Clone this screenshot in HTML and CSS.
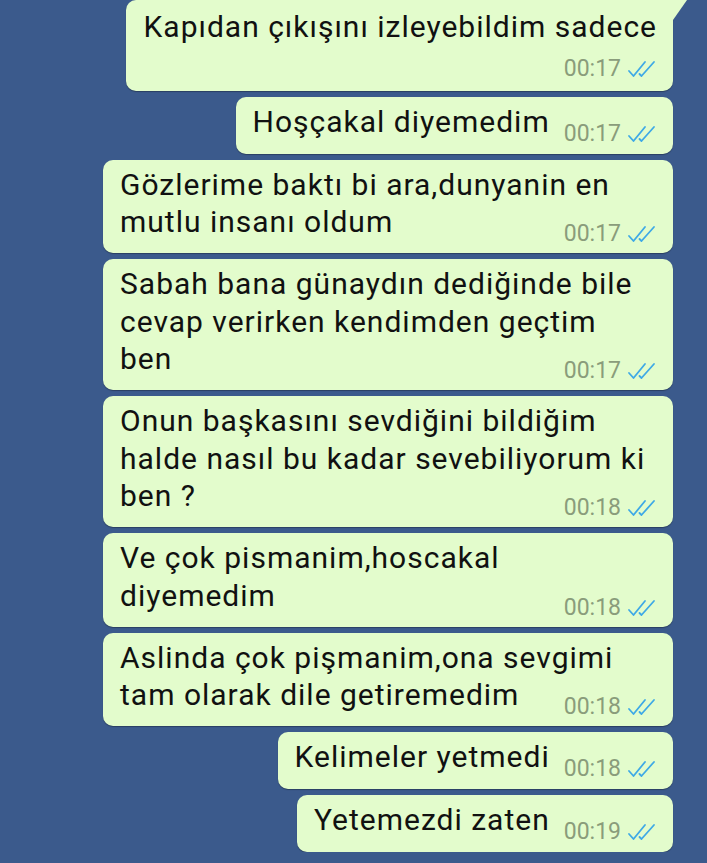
FILE: index.html
```html
<!DOCTYPE html>
<html lang="tr">
<head>
    <meta charset="utf-8">
    <title>Sohbet</title>
    <link rel="stylesheet" href="styles.css">
</head>
<body>
    <main class="chat">
        <div class="bubble first stack">
            <span class="text">Kapıdan çıkışını izleyebildim sadece</span>
            <span class="meta">00:17 <svg class="ticks" viewBox="0 0 30 18"><path d="M2 11 L6.5 16 L18 2"/><path d="M12.5 14 L14.5 16 L27 2"/></svg></span>
        </div>
        <div class="bubble">
            <span class="text">Hoşçakal diyemedim</span>
            <span class="meta">00:17 <svg class="ticks" viewBox="0 0 30 18"><path d="M2 11 L6.5 16 L18 2"/><path d="M12.5 14 L14.5 16 L27 2"/></svg></span>
        </div>
        <div class="bubble wide">
            <span class="text">Gözlerime baktı bi ara,dunyanin en mutlu insanı oldum</span>
            <span class="meta">00:17 <svg class="ticks" viewBox="0 0 30 18"><path d="M2 11 L6.5 16 L18 2"/><path d="M12.5 14 L14.5 16 L27 2"/></svg></span>
        </div>
        <div class="bubble wide">
            <span class="text">Sabah bana günaydın dediğinde bile cevap verirken kendimden geçtim ben</span>
            <span class="meta">00:17 <svg class="ticks" viewBox="0 0 30 18"><path d="M2 11 L6.5 16 L18 2"/><path d="M12.5 14 L14.5 16 L27 2"/></svg></span>
        </div>
        <div class="bubble wide">
            <span class="text">Onun başkasını sevdiğini bildiğim halde nasıl bu kadar sevebiliyorum ki ben ?</span>
            <span class="meta">00:18 <svg class="ticks" viewBox="0 0 30 18"><path d="M2 11 L6.5 16 L18 2"/><path d="M12.5 14 L14.5 16 L27 2"/></svg></span>
        </div>
        <div class="bubble wide">
            <span class="text">Ve çok pismanim,hoscakal diyemedim</span>
            <span class="meta">00:18 <svg class="ticks" viewBox="0 0 30 18"><path d="M2 11 L6.5 16 L18 2"/><path d="M12.5 14 L14.5 16 L27 2"/></svg></span>
        </div>
        <div class="bubble wide">
            <span class="text">Aslinda çok pişmanim,ona sevgimi tam olarak dile getiremedim</span>
            <span class="meta">00:18 <svg class="ticks" viewBox="0 0 30 18"><path d="M2 11 L6.5 16 L18 2"/><path d="M12.5 14 L14.5 16 L27 2"/></svg></span>
        </div>
        <div class="bubble">
            <span class="text">Kelimeler yetmedi</span>
            <span class="meta">00:18 <svg class="ticks" viewBox="0 0 30 18"><path d="M2 11 L6.5 16 L18 2"/><path d="M12.5 14 L14.5 16 L27 2"/></svg></span>
        </div>
        <div class="bubble">
            <span class="text">Yetemezdi zaten</span>
            <span class="meta">00:19 <svg class="ticks" viewBox="0 0 30 18"><path d="M2 11 L6.5 16 L18 2"/><path d="M12.5 14 L14.5 16 L27 2"/></svg></span>
        </div>
    </main>
</body>
</html>
```

FILE: styles.css
```css
* {
    margin: 0;
    padding: 0;
    box-sizing: border-box;
}
body {
    background: #3b5a8c;
    font-family: Roboto, "Noto Sans", sans-serif;
    color: #111;
    overflow: hidden;
}
.chat {
    display: flex;
    flex-direction: column;
    align-items: flex-end;
    gap: 6px;
    padding: 0 34px 0 0;
}
.bubble {
    position: relative;
    display: flow-root;
    max-width: 570px;
    background: #e3fccc;
    border-radius: 10px;
    padding: 6px 16px 8px 17px;
    font-size: 30px;
    line-height: 37.5px;
    letter-spacing: 1px;
    box-shadow: 0 1px 1px rgba(0, 0, 0, 0.3);
}
.bubble.wide {
    width: 570px;
    padding-right: 24px;
    padding-bottom: 7px;
}
.bubble.first {
    border-top-right-radius: 0;
    padding-top: 8px;
}
.bubble.first::after {
    content: '';
    position: absolute;
    top: 0;
    right: -14px;
    width: 14px;
    height: 20px;
    background: #e3fccc;
    clip-path: polygon(0 0, 100% 0, 0 100%);
}
.meta {
    float: right;
    display: flex;
    align-items: center;
    gap: 6px;
    margin: 19px 0 0 14px;
    font-size: 23px;
    line-height: 24px;
    letter-spacing: 0;
    color: #8a9c7b;
}
.wide .meta {
    margin-right: -8px;
}
.stack .meta {
    float: none;
    justify-content: flex-end;
    margin: 11px 0 2px;
}
.ticks {
    width: 30px;
    height: 18px;
    fill: none;
    stroke: #3ea9e6;
    stroke-width: 1.8;
    stroke-linecap: round;
    stroke-linejoin: round;
}
```
